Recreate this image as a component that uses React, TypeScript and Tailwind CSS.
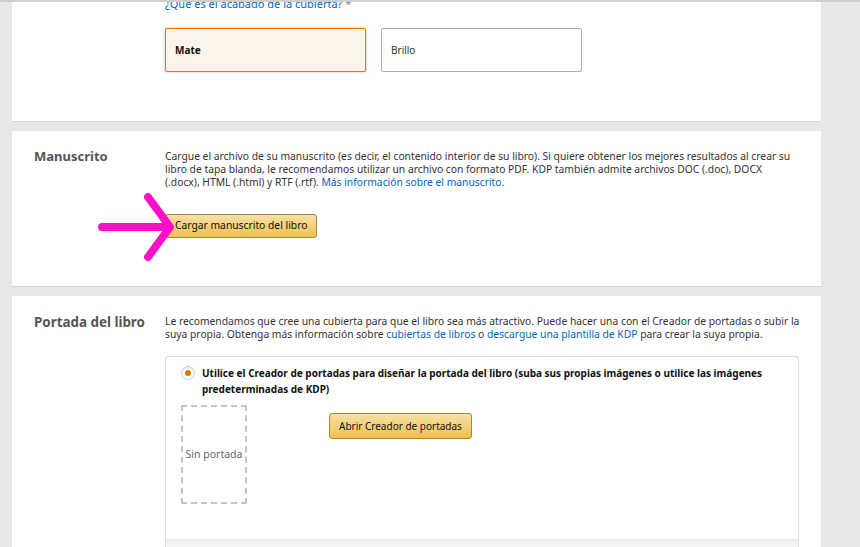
import React from "react";

const font = { fontFamily: '"Noto Sans", "Open Sans", Arial, sans-serif' };

function Arrow() {
  return (
    <svg
      className="absolute left-[80px] top-[58px]"
      width="90"
      height="80"
      viewBox="0 0 90 80"
      fill="none"
    >
      <g stroke="#ff0fc8" strokeWidth="8" strokeLinecap="round" strokeLinejoin="round">
        <line x1="10" y1="38" x2="76" y2="38" />
        <polyline points="56,8 78,38 56,68" />
      </g>
    </svg>
  );
}

export default function App() {
  return (
    <div
      className="relative h-[547px] w-[860px] overflow-hidden bg-[#e7e7e7] text-[#333]"
      style={font}
    >
      <div className="absolute left-0 top-0 z-10 h-[2px] w-full bg-[#cfcfcf]" />
      <div className="ml-[12px] flex w-[809px] flex-col gap-[9px]">
        {/* Panel 1 */}
        <div className="-mt-[3px] border-b border-[#d5d5d5] bg-white pb-[49px] pl-[153px]">
          <div className="text-[11px] leading-[13px] text-[#0066c0]">
            ¿Qué es el acabado de la cubierta? <span className="text-[#888]">*</span>
          </div>
          <div className="mt-[18px] flex gap-[15px]">
            <div className="flex h-[44px] w-[201px] items-center rounded-[2px] border border-[#e77600] bg-[#fdf4ea] pl-[9px] text-[10px] font-bold text-[#111] shadow-[0_0_3px_rgba(228,121,17,0.5)]">
              Mate
            </div>
            <div className="flex h-[44px] w-[201px] items-center rounded-[2px] border border-[#adadad] bg-white pl-[9px] text-[10px] text-[#333]">
              Brillo
            </div>
          </div>
        </div>

        {/* Panel 2 */}
        <div className="relative flex h-[156px] border-b border-[#d5d5d5] bg-white pt-[17px]">
          <div className="w-[153px] shrink-0 pl-[22px] text-[13px] font-bold leading-[16px] text-[#555]">
            Manuscrito
          </div>
          <div className="pt-[2px]">
            <p className="whitespace-nowrap text-[10.3px] leading-[13px] text-[#333]">
              Cargue el archivo de su manuscrito (es decir, el contenido interior de su libro). Si quiere obtener los mejores resultados al crear su
              <br />
              libro de tapa blanda, le recomendamos utilizar un archivo con formato PDF. KDP también admite archivos DOC (.doc), DOCX
              <br />
              (.docx), HTML (.html) y RTF (.rtf). <span className="text-[#0066c0]">Más información sobre el manuscrito.</span>
            </p>
            <button className="mt-[25px] flex h-[24px] items-center rounded-[3px] border border-[#a88734] bg-gradient-to-b from-[#f7dfa5] to-[#f0c14b] px-[9px] text-[10.3px] text-[#111]">
              Cargar manuscrito del libro
            </button>
          </div>
          <Arrow />
        </div>

        {/* Panel 3 */}
        <div className="flex h-[260px] bg-white pt-[17px]">
          <div className="w-[153px] shrink-0 pl-[22px] text-[13.4px] font-bold leading-[18px] text-[#555]">
            Portada del libro
          </div>
          <div className="flex flex-col pt-[2px]">
            <p className="whitespace-nowrap text-[10.3px] leading-[13px] text-[#333]">
              Le recomendamos que cree una cubierta para que el libro sea más atractivo. Puede hacer una con el Creador de portadas o subir la
              <br />
              suya propia. Obtenga más información sobre <span className="text-[#0066c0]">cubiertas de libros</span> o{" "}
              <span className="text-[#0066c0]">descargue una plantilla de KDP</span> para crear la suya propia.
            </p>
            <div className="mt-[15px] flex w-[634px] flex-col rounded-t-[4px] border border-b-0 border-[#dddddd]">
              <div className="h-[182px] pl-[15px] pt-[8px]">
                <div className="flex gap-[7px]">
                  <span className="mt-[1px] flex h-[14px] w-[14px] shrink-0 items-center justify-center rounded-full border border-[#c9c9c9] bg-white shadow-[inset_0_1px_1px_rgba(0,0,0,0.1)]">
                    <span className="h-[6px] w-[6px] rounded-full bg-[#e77600]" />
                  </span>
                  <div className="text-[10px] font-bold leading-[16px] text-[#111]">
                    Utilice el Creador de portadas para diseñar la portada del libro (suba sus propias imágenes o utilice las imágenes
                    <br />
                    predeterminadas de KDP)
                  </div>
                </div>
                <div className="mt-[8px] flex">
                  <div className="flex h-[99px] w-[66px] items-center justify-center border-2 border-dashed border-[#c4c4c4] text-[10.5px] text-[#666]">
                    Sin portada
                  </div>
                  <button className="ml-[82px] mt-[8px] flex h-[26px] items-center rounded-[3px] border border-[#a88734] bg-gradient-to-b from-[#f7dfa5] to-[#f0c14b] px-[9px] text-[10px] text-[#111]">
                    Abrir Creador de portadas
                  </button>
                </div>
              </div>
              <div className="h-[20px] border-t-2 border-[#ececec] bg-[#f3f3f3]" />
            </div>
          </div>
        </div>
      </div>
    </div>
  );
}
